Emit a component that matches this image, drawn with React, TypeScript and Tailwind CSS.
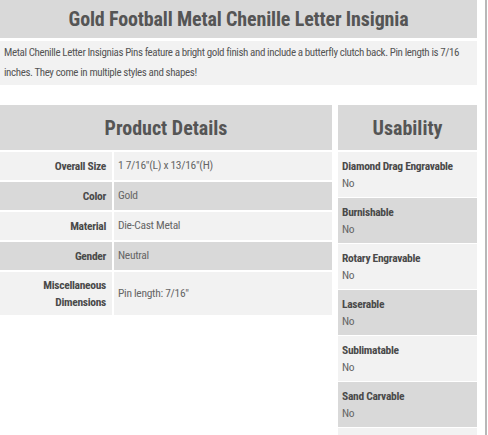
import React from "react";

const details: [React.ReactNode, string][] = [
  ["Overall Size", "1 7/16\"(L) x 13/16\"(H)"],
  ["Color", "Gold"],
  ["Material", "Die-Cast Metal"],
  ["Gender", "Neutral"],
  [
    <>
      Miscellaneous
      <br />
      Dimensions
    </>,
    "Pin length: 7/16\"",
  ],
];

const usability = [
  "Diamond Drag Engravable",
  "Burnishable",
  "Rotary Engravable",
  "Laserable",
  "Sublimatable",
  "Sand Carvable",
];

export default function App() {
  return (
    <div className="w-[488px] h-[435px] overflow-hidden bg-white font-['Roboto_Condensed','Liberation_Sans',sans-serif]">
      <div className="w-[487px] h-[435px] border-r-2 border-[#b8b8b8] box-border">
        <div className="w-[477px]">
          <div className="h-[38px] bg-[#d9d9d9] flex items-center justify-center text-[20px] font-bold tracking-[-0.15px] text-[#555555]">
            Gold Football Metal Chenille Letter Insignia
          </div>
          <div className="mt-[3px] h-[44px] bg-[#f2f2f2] px-[4px] pt-[2px] text-[11px] leading-[20px] tracking-[-0.4px] text-[#555555] whitespace-nowrap overflow-hidden">
            Metal Chenille Letter Insignias Pins feature a bright gold finish and include a butterfly clutch back. Pin length is 7/16
            <br />
            inches. They come in multiple styles and shapes!
          </div>
          <div className="mt-[20px] flex gap-[6px] items-start">
            <div className="w-[332px] flex flex-col gap-[2px]">
              <div className="h-[45px] bg-[#d9d9d9] flex items-center justify-center text-[20px] font-bold text-[#555555]">
                Product Details
              </div>
              {details.map(([k, v], i) => (
                <div key={i} className="flex gap-[2px]">
                  <div
                    className={`w-[112px] shrink-0 flex items-center justify-end text-right pr-[6px] text-[11.5px] tracking-[-0.3px] font-bold text-[#4a4a4a] leading-[17px] ${
                      i % 2 === 0 ? "bg-[#f2f2f2]" : "bg-[#d9d9d9]"
                    } ${i === 4 ? "h-[43px]" : "h-[28px]"}`}
                  >
                    <span>{k}</span>
                  </div>
                  <div
                    className={`flex-1 flex items-center pl-[4px] text-[11.5px] tracking-[-0.3px] text-[#666666] ${
                      i % 2 === 0 ? "bg-[#f2f2f2]" : "bg-[#d9d9d9]"
                    }`}
                  >
                    {v}
                  </div>
                </div>
              ))}
            </div>
            <div className="flex-1 flex flex-col gap-[1px]">
              <div className="h-[45px] mb-[1px] bg-[#d9d9d9] flex items-center justify-center text-[20px] font-bold text-[#555555]">
                Usability
              </div>
              {usability.map((u, i) => (
                <div
                  key={u}
                  className={`h-[45px] px-[4px] pt-[6px] text-[11.5px] tracking-[-0.3px] leading-[17px] ${
                    i % 2 === 0 ? "bg-[#f2f2f2]" : "bg-[#d9d9d9]"
                  }`}
                >
                  <div className="font-bold text-[#4a4a4a]">{u}</div>
                  <div className="text-[#666666]">No</div>
                </div>
              ))}
              <div className="h-[45px] bg-[#f2f2f2]" />
            </div>
          </div>
        </div>
      </div>
    </div>
  );
}
